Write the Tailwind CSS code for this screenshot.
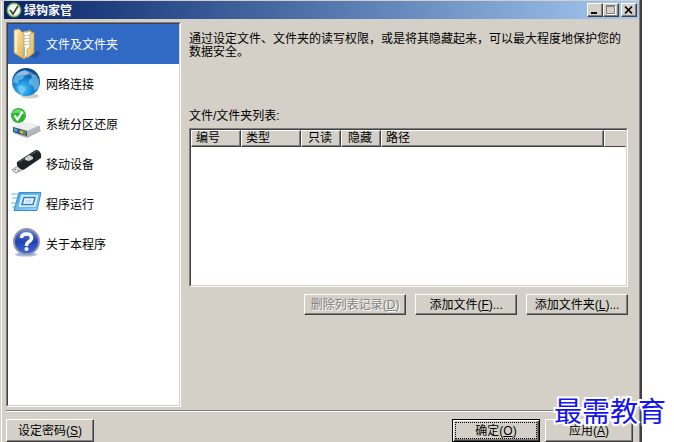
<!DOCTYPE html>
<html lang="zh-CN">
<head>
<meta charset="utf-8">
<title>绿钩家管</title>
<script src="https://cdn.jsdelivr.net/npm/@tailwindcss/browser@4"></script>
</head>
<body class="bg-white font-['Liberation_Sans','Noto_Sans_CJK_SC',sans-serif] text-xs text-black">
<div class="relative mr-8 flex min-h-screen flex-col border-r-2 border-[#404040] bg-[#d4d0c8] shadow-[inset_-1px_0_#808080]">
  <div class="flex grow flex-col border-l border-[#d4d0c8] pt-px">
  <div class="flex grow flex-col border-l border-white pr-px pl-0.5">

    <header class="flex h-[18px] items-center bg-linear-to-r from-[#0a246a] to-[#a6caf0] pr-0.5 pl-0.5">
      <svg class="h-4 w-4 shrink-0" viewBox="0 0 16 16" aria-hidden="true">
        <circle cx="8" cy="8" r="7.5" fill="#5f9d42"/>
        <circle cx="8" cy="8" r="6" fill="#f5f8ef" stroke="#c6dfb2"/>
        <path d="M4 8l3 4 5-8" fill="none" stroke="#35403a" stroke-width="1.6"/>
      </svg>
      <h1 class="ml-0.5 grow pt-0.5 font-bold leading-4 text-white">绿钩家管</h1>
      <div class="flex">
        <button aria-label="最小化" class="flex h-3.5 w-4 items-center justify-center border border-t-white border-r-[#404040] border-b-[#404040] border-l-white bg-[#d4d0c8] shadow-[inset_-1px_-1px_#808080]">
          <svg class="h-3 w-3" viewBox="0 0 12 12"><path d="M2 8h6v2H2z"/></svg>
        </button>
        <button aria-label="最大化" disabled class="flex h-3.5 w-4 items-center justify-center border border-t-white border-r-[#404040] border-b-[#404040] border-l-white bg-[#d4d0c8] shadow-[inset_-1px_-1px_#808080]">
          <svg class="h-3 w-3" viewBox="0 0 12 12" fill="none"><path d="M2 10.500h8.500V2" stroke="#fff"/><path d="M1.500 2.500h8v7h-8zM1 1.500h9" stroke="#808080"/></svg>
        </button>
        <button aria-label="关闭" class="ml-0.5 flex h-3.5 w-4 items-center justify-center border border-t-white border-r-[#404040] border-b-[#404040] border-l-white bg-[#d4d0c8] shadow-[inset_-1px_-1px_#808080]">
          <svg class="h-3 w-3" viewBox="0 0 12 12"><path d="M2 2.500l7 7M9 2.500l-7 7" stroke="#000" stroke-width="1.700"/></svg>
        </button>
      </div>
    </header>

    <div class="flex grow pt-[3px] pr-[11px] pl-0.5">
      <nav aria-label="功能" class="w-[175px] shrink-0 border border-t-[#808080] border-r-white border-b-white border-l-[#808080]">
        <div class="h-full border border-t-[#404040] border-r-[#d4d0c8] border-b-[#d4d0c8] border-l-[#404040] bg-white">
          <button aria-current="page" class="flex h-10 w-full items-center gap-1 bg-[#316ac5] pl-0.5 text-white">
            <svg class="h-8 w-8 shrink-0" viewBox="0 0 32 32" aria-hidden="true">
              <defs><linearGradient id="fold" x2="1" y2="1"><stop stop-color="#fff0bd"/><stop offset="1" stop-color="#dcae4f"/></linearGradient></defs>
              <path d="M19 28l8-5 4 1-5 6z" fill="#1e4789" opacity=".6"/>
              <path d="M12 4l8-2 2 2v23l-8 4z" fill="#d7b15b"/>
              <path d="M12 5l9-1v22l-7 3z" fill="#fff"/>
              <path d="M14 8l6-1M14 11l6-1M14 14l6-1M14 17l6-1" stroke="#b8c6d2"/>
              <path d="M4 2l5-1 5 5v25L4 25z" fill="url(#fold)" stroke="#c79a42" stroke-width=".7"/>
              <path d="M20 6l4-2v21l-7 5v-9l3-2z" fill="url(#fold)" stroke="#ba913f" stroke-width=".7"/>
              <path d="M6 4v20" stroke="#fff6d5" stroke-width="1.500"/>
              <path d="M14.500 19v9" stroke="#72c4d5" stroke-width="1.200"/>
            </svg>
            <span class="pt-0.5">文件及文件夹</span>
          </button>
          <button class="flex h-10 w-full items-center gap-1 pl-0.5">
            <svg class="h-8 w-8 shrink-0" viewBox="0 0 32 32" aria-hidden="true">
              <defs><radialGradient id="sea" cx=".4" cy=".75" r=".75"><stop stop-color="#43c8ff"/><stop offset=".5" stop-color="#1680d0"/><stop offset="1" stop-color="#0b4789"/></radialGradient></defs>
              <ellipse cx="20" cy="28" rx="9" ry="2.500" fill="#999" opacity=".5"/>
              <circle cx="16" cy="14" r="14" fill="url(#sea)"/>
              <path d="M4 9l5-5 6-2 4 3-2 2-3 1-1 3-4 1-1 4-4-2-2 3zM7 18l5-1 4 4-2 3-2 4-3-4zM21 7l5 0 3 5 0 7-4 4-2-5-4-2 0-4 3-2z" fill="#8fd0ef" opacity=".6"/>
              <path d="M5 8Q15-3 26 8 18 5 5 8z" fill="#fff" opacity=".3"/>
            </svg>
            <span class="pt-0.5">网络连接</span>
          </button>
          <button class="flex h-10 w-full items-center gap-1 pl-0.5">
            <svg class="h-8 w-8 shrink-0" viewBox="0 0 32 32" aria-hidden="true">
              <path d="M3 25l14 5 14-7-2-2z" fill="#777" opacity=".6"/>
              <path d="M3 20l11-5 16 3v4l-13 6-14-4z" fill="#b4b8bc"/>
              <path d="M3 19l11-5 16 3-13 6z" fill="#eceff0"/>
              <path d="M3 19l14 4v5L3 24z" fill="#334b60"/>
              <path d="M4 20l3 1v3l-3-1z" fill="#41afd0"/><path d="M7 21l3 1v3l-3-1z" fill="#315fc0"/><path d="M10 22l3 1v3l-3-1z" fill="#efae23"/><path d="M13 22l3 1v4l-3-1z" fill="#3c9b57"/>
              <circle cx="8.500" cy="7.500" r="7.500" fill="#28b830"/><path d="M1.500 6Q8-4 15.500 7 8 3 1.500 6z" fill="#a3ed92" opacity=".6"/>
              <path d="M4.500 7.500l3 4 5-8" fill="none" stroke="#fff" stroke-width="2.300"/>
            </svg>
            <span class="pt-0.5">系统分区还原</span>
          </button>
          <button class="flex h-10 w-full items-center gap-1 pl-0.5">
            <svg class="h-8 w-8 shrink-0" viewBox="0 0 32 32" aria-hidden="true">
              <path d="M2 22l7-5 5 4-8 4z" fill="#ddd" stroke="#888" stroke-width=".8"/>
              <path d="M5 22l1-1M8 23l1-1" stroke="#555"/>
              <path d="M7 14L24 3q3-2 5 0 3 3 2 7L15 21q-3 2-6-1-3-3-2-6z" fill="#202326"/>
              <path d="M9 14L25 4q2-1 3 0" fill="none" stroke="#666"/>
              <path d="M15 10l4-3 4 2v2l-4 2-4-1z" fill="#cdd3d4"/>
            </svg>
            <span class="pt-0.5">移动设备</span>
          </button>
          <button class="flex h-10 w-full items-center gap-1 pl-0.5">
            <svg class="h-8 w-8 shrink-0" viewBox="0 0 32 32" aria-hidden="true">
              <defs><linearGradient id="run" x2="1" y2="1"><stop stop-color="#3e9bdb"/><stop offset="1" stop-color="#a5dafa"/></linearGradient></defs>
              <path d="M1 6h8M2 10h7M1 15h6M2 19h5" stroke="#9bd0f0" stroke-width="1.500"/>
              <path d="M9 4.500h22l-4 18H4z" fill="url(#run)" stroke="#358fd3"/>
              <path d="M11 6.500h18l-3 13H8z" fill="#d7effd" stroke="#6bb7e7"/>
              <path d="M14 9.500h11l-2 7H12z" fill="#fff" stroke="#287fcc" stroke-width="1.500"/>
              <path d="M16 11.500h6l-1 3h-6z" fill="#bbdcf6"/>
            </svg>
            <span class="pt-0.5">程序运行</span>
          </button>
          <button class="flex h-10 w-full items-center gap-1 pl-0.5">
            <svg class="h-8 w-8 shrink-0" viewBox="0 0 32 32" aria-hidden="true">
              <defs><linearGradient id="help" y2="1" x2="0"><stop stop-color="#6787e3"/><stop offset=".5" stop-color="#2141b3"/><stop offset="1" stop-color="#4168dc"/></linearGradient></defs>
              <ellipse cx="16" cy="26.500" rx="11" ry="2" fill="#7189d0" opacity=".6"/>
              <circle cx="16.500" cy="13.500" r="12.500" fill="url(#help)" stroke="#9297a4" stroke-width="2"/>
              <path d="M11.500 10q0-4 5-4t5 4q0 2-3 4-2 1-2 4" fill="none" stroke="#fff" stroke-width="3.500"/>
              <circle cx="16.500" cy="21" r="2" fill="#fff"/>
            </svg>
            <span class="pt-0.5">关于本程序</span>
          </button>
        </div>
      </nav>

      <main class="flex min-w-0 grow flex-col pt-[11px] pl-2">
        <p class="h-[75px] leading-[13px]">通过设定文件、文件夹的读写权限，或是将其隐藏起来，可以最大程度地保护您的数据安全。</p>
        <h2 id="list-title" class="mb-1 leading-4">文件/文件夹列表:</h2>
        <div class="border border-t-[#808080] border-r-white border-b-white border-l-[#808080]">
          <div class="h-[157px] border border-t-[#404040] border-r-[#d4d0c8] border-b-[#d4d0c8] border-l-[#404040] bg-white">
            <table aria-labelledby="list-title" class="w-full table-fixed border-separate border-spacing-0 text-left leading-[15px] [&_th]:h-[17px] [&_th]:border [&_th]:border-t-white [&_th]:border-r-[#404040] [&_th]:border-b-[#404040] [&_th]:border-l-white [&_th]:bg-[#d4d0c8] [&_th]:p-0 [&_th]:pl-1 [&_th]:font-normal [&_th]:shadow-[inset_-1px_-1px_#808080]">
              <thead><tr>
                <th class="w-[50px]">编号</th>
                <th class="w-[60px]">类型</th>
                <th class="w-10"><span class="pl-0.5">只读</span></th>
                <th class="w-10"><span class="pl-0.5">隐藏</span></th>
                <th>路径</th>
                <td class="w-[22px] border border-t-white border-r-[#d4d0c8] border-b-[#404040] border-l-white bg-[#d4d0c8] p-0"></td>
              </tr></thead>
            </table>
          </div>
        </div>
        <div class="mt-[7px] flex justify-end gap-[9px]">
          <button disabled class="h-[21px] w-[102px] border border-t-white border-r-[#404040] border-b-[#404040] border-l-white leading-4 text-[#808080] shadow-[inset_-1px_-1px_#808080] text-shadow-[1px_1px_0_#fff]">删除列表记录(<u>D</u>)</button>
          <button class="h-[21px] w-[102px] border border-t-white border-r-[#404040] border-b-[#404040] border-l-white leading-4 shadow-[inset_-1px_-1px_#808080]">添加文件(<u>F</u>)...</button>
          <button class="h-[21px] w-[102px] border border-t-white border-r-[#404040] border-b-[#404040] border-l-white leading-4 shadow-[inset_-1px_-1px_#808080]">添加文件夹(<u>L</u>)...</button>
        </div>
      </main>
    </div>

    <footer class="pt-[3px] pr-1.5 pl-0.5">
      <div class="h-0.5 border-t border-b border-t-[#808080] border-b-white"></div>
      <div class="flex gap-[5px] pt-[7px]">
        <button class="mr-auto h-[23px] w-[88px] border border-t-white border-r-[#404040] border-b-[#404040] border-l-white leading-4 shadow-[inset_-1px_-1px_#808080]">设定密码(<u>S</u>)</button>
        <button class="h-[23px] w-[88px] border border-black p-0.5 leading-4 shadow-[inset_1px_1px_#fff,inset_-1px_-1px_#404040,inset_-2px_-2px_#808080]"><span class="flex h-full items-center justify-center border border-dotted border-black"><span>确定(<u>O</u>)</span></span></button>
        <button class="h-[23px] w-[88px] border border-t-white border-r-[#404040] border-b-[#404040] border-l-white leading-4 shadow-[inset_-1px_-1px_#808080]">应用(<u>A</u>)</button>
      </div>
    </footer>
  </div>
  </div>
  <p class="pointer-events-none absolute -right-[26px] bottom-[18px] font-['Noto_Sans_CJK_SC',sans-serif] text-[28px] leading-7 whitespace-nowrap text-[#1414ee] [-webkit-text-stroke:4px_#fff] [paint-order:stroke_fill]">最需教育</p>
</div>
</body>
</html>
